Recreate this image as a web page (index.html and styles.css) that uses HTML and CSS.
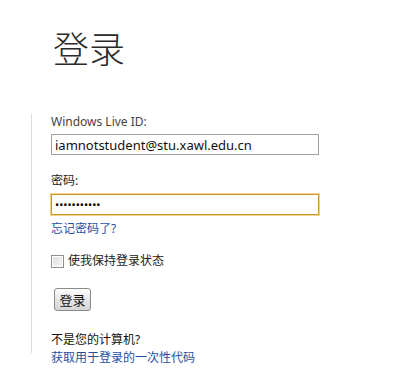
FILE: index.html
```
<!DOCTYPE html>
<html lang="zh-CN">
<head>
<meta charset="utf-8"/>
<meta content="width=device-width, initial-scale=1.0" name="viewport"/>
<title>登录</title>
<link rel="stylesheet" href="styles.css">
</head>
<body>
<h1 class="title">登录</h1>
<div class="panel">
  <label class="label" for="liveid">Windows Live ID:</label>
  <input class="field" id="liveid" type="text" value="iamnotstudent@stu.xawl.edu.cn"/>
  <label class="label label-pw" for="pw">密码:</label>
  <input class="field field-focus" id="pw" type="password" value="abcdefghijk"/>
  <a class="link forgot" href="#">忘记密码了?</a>
  <div class="remember">
    <input class="check" id="keep" type="checkbox"/>
    <label for="keep">使我保持登录状态</label>
  </div>
  <button class="btn">登录</button>
  <div class="other">不是您的计算机?</div>
</div>
<a class="link otc" href="#">获取用于登录的一次性代码</a>
</body>
</html>
```
FILE: styles.css
```
body {
  margin: 0;
  background: #fff;
  color: #222;
  font-family: "Noto Sans", "Noto Sans CJK SC", sans-serif;
  font-size: 12px;
}
.title {
  margin: 0;
  padding: 22px 0 0 53px;
  height: 90px;
  box-sizing: border-box;
  font-family: "Noto Sans CJK SC", sans-serif;
  font-size: 36px;
  font-weight: 300;
  line-height: 50px;
  color: #2a2a2a;
}
.panel {
  margin: 24px 0 0 31px;
  padding: 0 0 5px 19px;
  border-left: 1px solid #dcdcdc;
  display: flex;
  flex-direction: column;
  align-items: flex-start;
}
.label {
  display: block;
  line-height: 16px;
  color: #444;
}
.label-pw {
  margin-top: 18px;
  color: #222;
}
.field {
  display: block;
  margin: 4px 0 0;
  width: 268px;
  height: 21px;
  box-sizing: border-box;
  padding: 0 3px;
  border: 1px solid #a0a0a0;
  font-family: "Noto Sans", sans-serif;
  font-size: 13px;
  color: #111;
  outline: none;
}
.field-focus {
  margin-top: 5px;
  border: 1px solid #c8982c;
  box-shadow: 0 0 0 1px #f1d58e;
  font-size: 11px;
  color: #000;
}
.link {
  color: #1f4ea6;
  text-decoration: none;
  line-height: 16px;
}
.forgot {
  margin-top: 6px;
}
.remember {
  margin-top: 16px;
  display: flex;
  align-items: center;
  gap: 4px;
  line-height: 16px;
  color: #222;
}
.check {
  appearance: none;
  margin: 0;
  width: 13px;
  height: 13px;
  border: 1px solid #8f8f8f;
  background: linear-gradient(135deg, #dcdcdc, #f8f8f8);
  box-shadow: inset 0 0 0 1px #fff;
}
.btn {
  margin: 19px 0 0 3px;
  width: 37px;
  height: 23px;
  padding: 0;
  border: 1px solid #8a8a8a;
  border-radius: 3px;
  background: linear-gradient(to bottom, #fdfdfd, #e4e4e4 55%, #d6d6d6);
  font-family: "Noto Sans CJK SC", sans-serif;
  font-size: 13px;
  color: #111;
}
.other {
  margin-top: 21px;
  line-height: 16px;
  color: #111;
}
.otc {
  display: block;
  margin: -3px 0 0 51px;
}
```
